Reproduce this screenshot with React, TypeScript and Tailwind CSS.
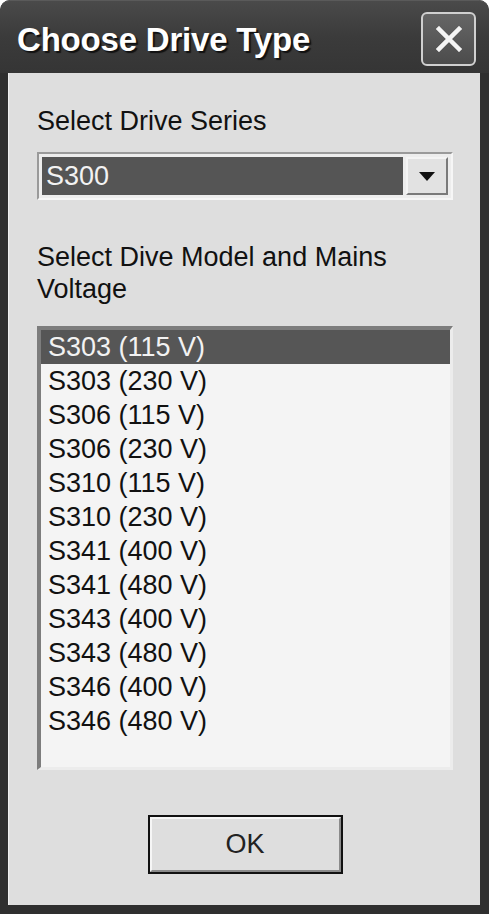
import React from 'react';

const models = [
  'S303 (115 V)',
  'S303 (230 V)',
  'S306 (115 V)',
  'S306 (230 V)',
  'S310 (115 V)',
  'S310 (230 V)',
  'S341 (400 V)',
  'S341 (480 V)',
  'S343 (400 V)',
  'S343 (480 V)',
  'S346 (400 V)',
  'S346 (480 V)',
];

const font = { fontFamily: '"Liberation Sans", Arial, sans-serif' };

export default function App() {
  const selected = 0;

  return (
    <div
      className="w-[489px] h-[914px] flex flex-col bg-[#2f2f2f] rounded-t-[10px] overflow-hidden"
      style={font}
    >
      {/* title bar */}
      <div className="h-[73px] flex items-center justify-between pl-[17px] pr-[13px] bg-gradient-to-b from-[#4a4a4a] via-[#3b3b3b] to-[#353535] border-t border-[#5a5a5a] rounded-t-[10px]">
        <div className="text-white font-bold text-[33px] tracking-[-0.2px] [text-shadow:2px_2px_1px_#111] pt-[6px]">
          Choose Drive Type
        </div>
        <button className="w-[55px] h-[54px] mt-[4px] rounded-[6px] border-2 border-[#d0d0d0] bg-gradient-to-b from-[#666] to-[#4c4c4c] flex items-center justify-center">
          <svg width="26" height="26" viewBox="0 0 26 26">
            <path d="M3 3 L23 23 M23 3 L3 23" stroke="#f4f4f4" strokeWidth="4.5" strokeLinecap="square" />
          </svg>
        </button>
      </div>

      {/* body */}
      <div className="flex-1 ml-[8px] mr-[9px] mb-[9px] bg-[#dedede] border-l border-[#efefef] pl-[28px] pr-[27px] pt-[32px] flex flex-col text-[27px] text-[#111]">
        <div className="leading-[32px]">Select Drive Series</div>

        <div className="mt-[15px] h-[48px] flex border-2 border-t-[#9a9a9a] border-l-[#9a9a9a] border-b-[#f6f6f6] border-r-[#f6f6f6] bg-[#ededed] p-[3px] gap-[3px]">
          <div className="flex-1 bg-[#555] text-[#f2f2f2] leading-[38px] pl-[4px]">S300</div>
          <div className="w-[42px] bg-[#e2e2e2] border-2 border-t-[#f4f4f4] border-l-[#f4f4f4] border-b-[#7a7a7a] border-r-[#7a7a7a] flex items-center justify-center">
            <svg width="16" height="9" viewBox="0 0 16 9">
              <path d="M0 0 H16 L8 9 Z" fill="#111" />
            </svg>
          </div>
        </div>

        <div className="mt-[41px] leading-[32px]">
          Select Dive Model and Mains
          <br />
          Voltage
        </div>

        <div className="mt-[21px] h-[444px] border-t-[4px] border-l-[4px] border-b-[3px] border-r-[3px] border-t-[#7d7d7d] border-l-[#7d7d7d] border-b-[#ececec] border-r-[#ececec] bg-[#f4f4f4]">
          {models.map((m, i) => (
            <div
              key={m}
              className={`h-[34px] leading-[34px] pl-[7px] ${
                i === selected ? 'bg-[#565656] text-[#f2f2f2]' : 'text-[#111]'
              }`}
            >
              {m}
            </div>
          ))}
        </div>

        <div className="flex justify-center mt-[45px]">
          <button className="w-[195px] h-[59px] border-[2px] border-[#111] bg-[#dedede] flex">
            <div className="flex-1 border-2 border-t-[#f6f6f6] border-l-[#f6f6f6] border-b-[#8a8a8a] border-r-[#8a8a8a] flex items-center justify-center text-[27px] text-[#222]">
              OK
            </div>
          </button>
        </div>
      </div>
    </div>
  );
}
